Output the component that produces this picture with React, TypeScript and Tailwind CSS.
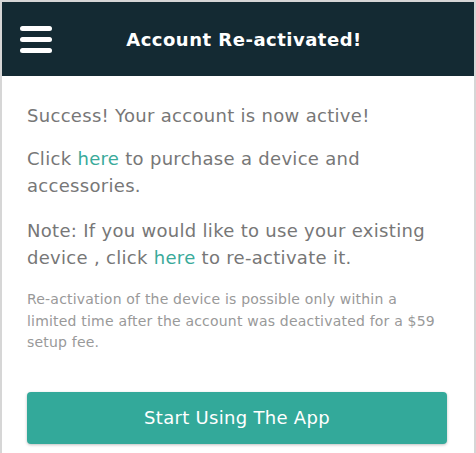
import React from 'react';

const font = { fontFamily: '"DejaVu Sans", "Noto Sans", sans-serif' };

export default function App() {
  return (
    <div
      className="w-[476px] h-[453px] overflow-hidden bg-white border-x-2 border-t-2 border-[#d6d6d6] flex flex-col"
      style={font}
    >
      {/* Header */}
      <div className="h-[74px] bg-[#142a33] flex items-center px-[18px] shrink-0">
        <div className="flex flex-col gap-[6px] w-[32px]">
          <span className="h-[5px] rounded-full bg-white" />
          <span className="h-[5px] rounded-full bg-white" />
          <span className="h-[5px] rounded-full bg-white" />
        </div>
        <h1 className="flex-1 text-center text-white text-[18px] font-bold tracking-[0.5px] pr-[20px]">
          Account Re-activated!
        </h1>
      </div>

      {/* Body */}
      <div className="flex-1 px-[25px] pt-[26px] text-[#777] text-[18px] leading-[27px] tracking-[0.3px]">
        <p className="mb-[16px]">Success! Your account is now active!</p>
        <p className="mb-[18px]">
          Click <a className="text-[#3aaa9a]">here</a> to purchase a device and accessories.
        </p>
        <p className="mb-[18px]">
          Note: If you would like to use your existing device , click{' '}
          <a className="text-[#3aaa9a]">here</a> to re-activate it.
        </p>
        <p className="text-[14px] leading-[21.5px] tracking-[0.2px] text-[#999]">
          Re-activation of the device is possible only within a limited time after the account was
          deactivated for a $59 setup fee.
        </p>
        <button className="mt-[38px] w-[420px] h-[52px] rounded-[4px] bg-[#33a99a] text-white text-[18px] tracking-[0.3px] shadow-[0_1px_3px_rgba(0,0,0,0.25)]">
          Start Using The App
        </button>
      </div>
    </div>
  );
}
